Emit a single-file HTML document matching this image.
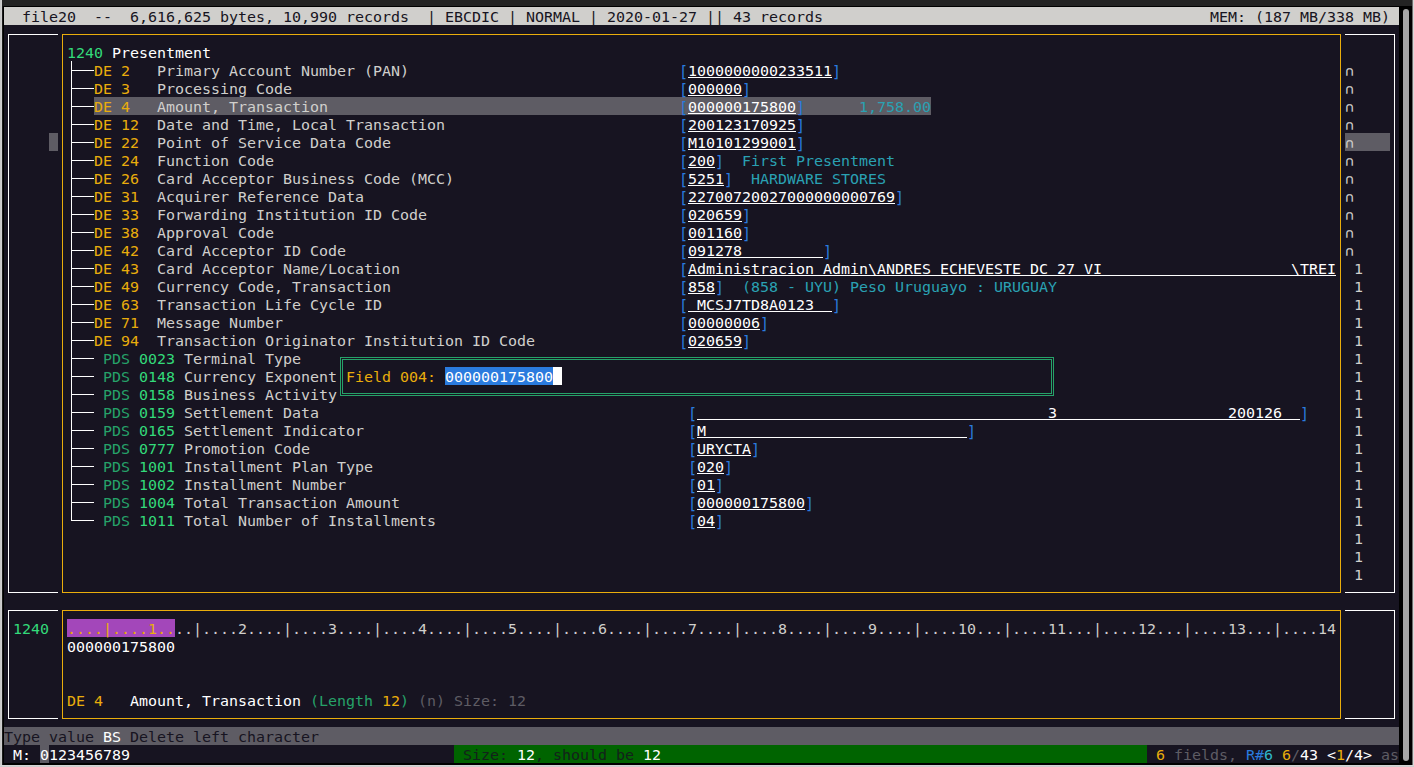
<!DOCTYPE html>
<html lang="en"><head><meta charset="utf-8"><title>file20 - record editor</title>
<style>
html,body{margin:0;padding:0;background:#000;}
#win{position:relative;width:1414px;height:767px;overflow:hidden;background:#000;}
#term{position:absolute;left:4px;top:7px;width:1395px;height:756px;background:#171421;overflow:hidden;font-family:"DejaVu Sans Mono","Liberation Mono",monospace;font-size:15px;line-height:18px;font-kerning:none;font-variant-ligatures:none;letter-spacing:-0.0308px;}
#term div.r{position:absolute;left:0;height:18px;width:1395px;white-space:pre;transform-origin:0 14px;transform:translateY(1px) scaleY(0.88);}
#term div.r span{position:absolute;top:0;height:18px;white-space:pre;}
#term i{position:absolute;display:block;}
.w{color:#ffffff}
.l{color:#d0cfcc}
.y{color:#e9ad0c}
.g{color:#26a269}
.G{color:#33da7a}
.b{color:#2a7bde}
.c{color:#2aa1b3}
.B{color:#2a7bde;transform-origin:0 14px;transform:scaleY(1.13636) translateY(1px)}
.d{color:#5e5c64}
.C{color:#2fb8cc}
.u{color:#ffffff}
.k{color:#171421}
.hd{color:#171421}
.gd{color:#13211b}
</style></head><body>
<div id="win">
<div style="position:absolute;left:0;top:0;width:1414px;height:6px;background:#232323"></div>
<div style="position:absolute;left:2px;top:6px;width:1px;height:759px;background:#1c1c1c"></div>
<div style="position:absolute;left:0;top:0;width:2px;height:767px;background:linear-gradient(90deg,#c4c4c4,#d2d2d2)"></div>
<div style="position:absolute;left:1412px;top:0;width:1px;height:767px;background:#6e6e6e"></div>
<div style="position:absolute;left:1413px;top:0;width:1px;height:767px;background:#d8d8d8"></div>
<div style="position:absolute;left:0;top:765px;width:1414px;height:2px;background:linear-gradient(180deg,#d8d8d8,#c8c8c8)"></div>
<div style="position:absolute;left:1403px;top:9px;width:6px;height:752px;border-radius:3px;background:#a6a6a6"></div>
<div id="term">
<i style="left:0px;top:0px;width:1395px;height:18px;background:#d0cfcc"></i>
<i style="left:90px;top:90px;width:837px;height:18px;background:#5e5c64"></i>
<i style="left:1341px;top:126px;width:45px;height:18px;background:#5e5c64"></i>
<i style="left:45px;top:126px;width:9px;height:18px;background:#5e5c64"></i>
<i style="left:333px;top:342px;width:720px;height:18px;background:#171421"></i>
<i style="left:333px;top:360px;width:720px;height:18px;background:#171421"></i>
<i style="left:333px;top:378px;width:720px;height:18px;background:#171421"></i>
<i style="left:441px;top:360px;width:108px;height:18px;background:#2a7bde"></i>
<i style="left:549px;top:360px;width:9px;height:18px;background:#ffffff"></i>
<i style="left:63px;top:612px;width:108px;height:18px;background:#a347ba"></i>
<i style="left:0px;top:720px;width:1395px;height:18px;background:#5e5c64"></i>
<i style="left:36px;top:738px;width:9px;height:18px;background:#5e5c64"></i>
<i style="left:450px;top:738px;width:693px;height:18px;background:#006400"></i>
<i style="left:4px;top:27px;width:50px;height:1px;background:#ffffff"></i>
<i style="left:4px;top:585px;width:50px;height:1px;background:#ffffff"></i>
<i style="left:4px;top:27px;width:1px;height:559px;background:#ffffff"></i>
<i style="left:58px;top:27px;width:1279px;height:1px;background:#e9ad0c"></i>
<i style="left:58px;top:585px;width:1279px;height:1px;background:#e9ad0c"></i>
<i style="left:58px;top:27px;width:1px;height:559px;background:#e9ad0c"></i>
<i style="left:1336px;top:27px;width:1px;height:559px;background:#e9ad0c"></i>
<i style="left:1341px;top:27px;width:50px;height:1px;background:#ffffff"></i>
<i style="left:1341px;top:585px;width:50px;height:1px;background:#ffffff"></i>
<i style="left:1390px;top:27px;width:1px;height:559px;background:#ffffff"></i>
<i style="left:4px;top:603px;width:50px;height:1px;background:#ffffff"></i>
<i style="left:4px;top:711px;width:50px;height:1px;background:#ffffff"></i>
<i style="left:4px;top:603px;width:1px;height:109px;background:#ffffff"></i>
<i style="left:58px;top:603px;width:1279px;height:1px;background:#e9ad0c"></i>
<i style="left:58px;top:711px;width:1279px;height:1px;background:#e9ad0c"></i>
<i style="left:58px;top:603px;width:1px;height:109px;background:#e9ad0c"></i>
<i style="left:1336px;top:603px;width:1px;height:109px;background:#e9ad0c"></i>
<i style="left:1341px;top:603px;width:50px;height:1px;background:#ffffff"></i>
<i style="left:1341px;top:711px;width:50px;height:1px;background:#ffffff"></i>
<i style="left:1390px;top:603px;width:1px;height:109px;background:#ffffff"></i>
<i style="left:67px;top:63px;width:23px;height:1px;background:#ffffff"></i>
<i style="left:684px;top:70px;width:144px;height:1px;background:#ffffff"></i>
<i style="left:67px;top:81px;width:23px;height:1px;background:#ffffff"></i>
<i style="left:684px;top:88px;width:54px;height:1px;background:#ffffff"></i>
<i style="left:67px;top:99px;width:23px;height:1px;background:#ffffff"></i>
<i style="left:684px;top:106px;width:108px;height:1px;background:#ffffff"></i>
<i style="left:67px;top:117px;width:23px;height:1px;background:#ffffff"></i>
<i style="left:684px;top:124px;width:108px;height:1px;background:#ffffff"></i>
<i style="left:67px;top:135px;width:23px;height:1px;background:#ffffff"></i>
<i style="left:684px;top:142px;width:108px;height:1px;background:#ffffff"></i>
<i style="left:67px;top:153px;width:23px;height:1px;background:#ffffff"></i>
<i style="left:684px;top:160px;width:27px;height:1px;background:#ffffff"></i>
<i style="left:67px;top:171px;width:23px;height:1px;background:#ffffff"></i>
<i style="left:684px;top:178px;width:36px;height:1px;background:#ffffff"></i>
<i style="left:67px;top:189px;width:23px;height:1px;background:#ffffff"></i>
<i style="left:684px;top:196px;width:207px;height:1px;background:#ffffff"></i>
<i style="left:67px;top:207px;width:23px;height:1px;background:#ffffff"></i>
<i style="left:684px;top:214px;width:54px;height:1px;background:#ffffff"></i>
<i style="left:67px;top:225px;width:23px;height:1px;background:#ffffff"></i>
<i style="left:684px;top:232px;width:54px;height:1px;background:#ffffff"></i>
<i style="left:67px;top:243px;width:23px;height:1px;background:#ffffff"></i>
<i style="left:684px;top:250px;width:135px;height:1px;background:#ffffff"></i>
<i style="left:67px;top:261px;width:23px;height:1px;background:#ffffff"></i>
<i style="left:684px;top:268px;width:648px;height:1px;background:#ffffff"></i>
<i style="left:67px;top:279px;width:23px;height:1px;background:#ffffff"></i>
<i style="left:684px;top:286px;width:27px;height:1px;background:#ffffff"></i>
<i style="left:67px;top:297px;width:23px;height:1px;background:#ffffff"></i>
<i style="left:684px;top:304px;width:144px;height:1px;background:#ffffff"></i>
<i style="left:67px;top:315px;width:23px;height:1px;background:#ffffff"></i>
<i style="left:684px;top:322px;width:72px;height:1px;background:#ffffff"></i>
<i style="left:67px;top:333px;width:23px;height:1px;background:#ffffff"></i>
<i style="left:684px;top:340px;width:54px;height:1px;background:#ffffff"></i>
<i style="left:67px;top:351px;width:23px;height:1px;background:#ffffff"></i>
<i style="left:67px;top:369px;width:23px;height:1px;background:#ffffff"></i>
<i style="left:67px;top:387px;width:23px;height:1px;background:#ffffff"></i>
<i style="left:67px;top:405px;width:23px;height:1px;background:#ffffff"></i>
<i style="left:693px;top:412px;width:603px;height:1px;background:#ffffff"></i>
<i style="left:67px;top:423px;width:23px;height:1px;background:#ffffff"></i>
<i style="left:693px;top:430px;width:270px;height:1px;background:#ffffff"></i>
<i style="left:67px;top:441px;width:23px;height:1px;background:#ffffff"></i>
<i style="left:693px;top:448px;width:54px;height:1px;background:#ffffff"></i>
<i style="left:67px;top:459px;width:23px;height:1px;background:#ffffff"></i>
<i style="left:693px;top:466px;width:27px;height:1px;background:#ffffff"></i>
<i style="left:67px;top:477px;width:23px;height:1px;background:#ffffff"></i>
<i style="left:693px;top:484px;width:18px;height:1px;background:#ffffff"></i>
<i style="left:67px;top:495px;width:23px;height:1px;background:#ffffff"></i>
<i style="left:693px;top:502px;width:108px;height:1px;background:#ffffff"></i>
<i style="left:67px;top:513px;width:23px;height:1px;background:#ffffff"></i>
<i style="left:693px;top:520px;width:18px;height:1px;background:#ffffff"></i>
<i style="left:67px;top:54px;width:1px;height:460px;background:#ffffff"></i>
<i style="left:336px;top:350px;width:712px;height:37px;border:1px solid #26a269"></i>
<i style="left:338px;top:352px;width:708px;height:33px;border:1px solid #26a269"></i>
<div class="r" style="top:0px"><span class="k" style="left:0px">  file20  --  6,616,625 bytes, 10,990 records  | EBCDIC | NORMAL | 2020-01-27 || 43 records</span><span class="k" style="left:1206px">MEM: (187 MB/338 MB)</span></div>
<div class="r" style="top:36px"><span class="G" style="left:63px">1240</span><span class="w" style="left:108px">Presentment</span></div>
<div class="r" style="top:54px"><span class="y" style="left:90px">DE</span><span class="y" style="left:117px">2</span><span class="l" style="left:153px">Primary Account Number (PAN)</span><span class="B" style="left:675px">[</span><span class="u" style="left:684px">1000000000233511</span><span class="B" style="left:828px">]</span><span class="l" style="left:1341px">∩</span></div>
<div class="r" style="top:72px"><span class="y" style="left:90px">DE</span><span class="y" style="left:117px">3</span><span class="l" style="left:153px">Processing Code</span><span class="B" style="left:675px">[</span><span class="u" style="left:684px">000000</span><span class="B" style="left:738px">]</span><span class="l" style="left:1341px">∩</span></div>
<div class="r" style="top:90px"><span class="y" style="left:90px">DE</span><span class="y" style="left:117px">4</span><span class="l" style="left:153px">Amount, Transaction</span><span class="B" style="left:675px">[</span><span class="u" style="left:684px">000000175800</span><span class="B" style="left:792px">]</span><span class="c" style="left:855px">1,758.00</span><span class="l" style="left:1341px">∩</span></div>
<div class="r" style="top:108px"><span class="y" style="left:90px">DE</span><span class="y" style="left:117px">12</span><span class="l" style="left:153px">Date and Time, Local Transaction</span><span class="B" style="left:675px">[</span><span class="u" style="left:684px">200123170925</span><span class="B" style="left:792px">]</span><span class="l" style="left:1341px">∩</span></div>
<div class="r" style="top:126px"><span class="y" style="left:90px">DE</span><span class="y" style="left:117px">22</span><span class="l" style="left:153px">Point of Service Data Code</span><span class="B" style="left:675px">[</span><span class="u" style="left:684px">M10101299001</span><span class="B" style="left:792px">]</span><span class="l" style="left:1341px">∩</span></div>
<div class="r" style="top:144px"><span class="y" style="left:90px">DE</span><span class="y" style="left:117px">24</span><span class="l" style="left:153px">Function Code</span><span class="B" style="left:675px">[</span><span class="u" style="left:684px">200</span><span class="B" style="left:711px">]</span><span class="c" style="left:738px">First Presentment</span><span class="l" style="left:1341px">∩</span></div>
<div class="r" style="top:162px"><span class="y" style="left:90px">DE</span><span class="y" style="left:117px">26</span><span class="l" style="left:153px">Card Acceptor Business Code (MCC)</span><span class="B" style="left:675px">[</span><span class="u" style="left:684px">5251</span><span class="B" style="left:720px">]</span><span class="c" style="left:747px">HARDWARE STORES</span><span class="l" style="left:1341px">∩</span></div>
<div class="r" style="top:180px"><span class="y" style="left:90px">DE</span><span class="y" style="left:117px">31</span><span class="l" style="left:153px">Acquirer Reference Data</span><span class="B" style="left:675px">[</span><span class="u" style="left:684px">22700720027000000000769</span><span class="B" style="left:891px">]</span><span class="l" style="left:1341px">∩</span></div>
<div class="r" style="top:198px"><span class="y" style="left:90px">DE</span><span class="y" style="left:117px">33</span><span class="l" style="left:153px">Forwarding Institution ID Code</span><span class="B" style="left:675px">[</span><span class="u" style="left:684px">020659</span><span class="B" style="left:738px">]</span><span class="l" style="left:1341px">∩</span></div>
<div class="r" style="top:216px"><span class="y" style="left:90px">DE</span><span class="y" style="left:117px">38</span><span class="l" style="left:153px">Approval Code</span><span class="B" style="left:675px">[</span><span class="u" style="left:684px">001160</span><span class="B" style="left:738px">]</span><span class="l" style="left:1341px">∩</span></div>
<div class="r" style="top:234px"><span class="y" style="left:90px">DE</span><span class="y" style="left:117px">42</span><span class="l" style="left:153px">Card Acceptor ID Code</span><span class="B" style="left:675px">[</span><span class="u" style="left:684px">091278         </span><span class="B" style="left:819px">]</span><span class="l" style="left:1341px">∩</span></div>
<div class="r" style="top:252px"><span class="y" style="left:90px">DE</span><span class="y" style="left:117px">43</span><span class="l" style="left:153px">Card Acceptor Name/Location</span><span class="B" style="left:675px">[</span><span class="u" style="left:684px">Administracion Admin\ANDRES ECHEVESTE DC 27 VI                     \TREI</span><span class="l" style="left:1350px">1</span></div>
<div class="r" style="top:270px"><span class="y" style="left:90px">DE</span><span class="y" style="left:117px">49</span><span class="l" style="left:153px">Currency Code, Transaction</span><span class="B" style="left:675px">[</span><span class="u" style="left:684px">858</span><span class="B" style="left:711px">]</span><span class="c" style="left:738px">(858 - UYU) Peso Uruguayo : URUGUAY</span><span class="l" style="left:1350px">1</span></div>
<div class="r" style="top:288px"><span class="y" style="left:90px">DE</span><span class="y" style="left:117px">63</span><span class="l" style="left:153px">Transaction Life Cycle ID</span><span class="B" style="left:675px">[</span><span class="u" style="left:684px"> MCSJ7TD8A0123  </span><span class="B" style="left:828px">]</span><span class="l" style="left:1350px">1</span></div>
<div class="r" style="top:306px"><span class="y" style="left:90px">DE</span><span class="y" style="left:117px">71</span><span class="l" style="left:153px">Message Number</span><span class="B" style="left:675px">[</span><span class="u" style="left:684px">00000006</span><span class="B" style="left:756px">]</span><span class="l" style="left:1350px">1</span></div>
<div class="r" style="top:324px"><span class="y" style="left:90px">DE</span><span class="y" style="left:117px">94</span><span class="l" style="left:153px">Transaction Originator Institution ID Code</span><span class="B" style="left:675px">[</span><span class="u" style="left:684px">020659</span><span class="B" style="left:738px">]</span><span class="l" style="left:1350px">1</span></div>
<div class="r" style="top:342px"><span class="g" style="left:99px">PDS</span><span class="G" style="left:135px">0023</span><span class="l" style="left:180px">Terminal Type</span><span class="l" style="left:1350px">1</span></div>
<div class="r" style="top:360px"><span class="g" style="left:99px">PDS</span><span class="G" style="left:135px">0148</span><span class="l" style="left:180px">Currency Exponent</span><span class="y" style="left:342px">Field 004:</span><span class="w" style="left:441px">000000175800</span><span class="l" style="left:1350px">1</span></div>
<div class="r" style="top:378px"><span class="g" style="left:99px">PDS</span><span class="G" style="left:135px">0158</span><span class="l" style="left:180px">Business Activity</span><span class="l" style="left:1350px">1</span></div>
<div class="r" style="top:396px"><span class="g" style="left:99px">PDS</span><span class="G" style="left:135px">0159</span><span class="l" style="left:180px">Settlement Data</span><span class="B" style="left:684px">[</span><span class="u" style="left:693px">                                       3                   200126  </span><span class="B" style="left:1296px">]</span><span class="l" style="left:1350px">1</span></div>
<div class="r" style="top:414px"><span class="g" style="left:99px">PDS</span><span class="G" style="left:135px">0165</span><span class="l" style="left:180px">Settlement Indicator</span><span class="B" style="left:684px">[</span><span class="u" style="left:693px">M                             </span><span class="B" style="left:963px">]</span><span class="l" style="left:1350px">1</span></div>
<div class="r" style="top:432px"><span class="g" style="left:99px">PDS</span><span class="G" style="left:135px">0777</span><span class="l" style="left:180px">Promotion Code</span><span class="B" style="left:684px">[</span><span class="u" style="left:693px">URYCTA</span><span class="B" style="left:747px">]</span><span class="l" style="left:1350px">1</span></div>
<div class="r" style="top:450px"><span class="g" style="left:99px">PDS</span><span class="G" style="left:135px">1001</span><span class="l" style="left:180px">Installment Plan Type</span><span class="B" style="left:684px">[</span><span class="u" style="left:693px">020</span><span class="B" style="left:720px">]</span><span class="l" style="left:1350px">1</span></div>
<div class="r" style="top:468px"><span class="g" style="left:99px">PDS</span><span class="G" style="left:135px">1002</span><span class="l" style="left:180px">Installment Number</span><span class="B" style="left:684px">[</span><span class="u" style="left:693px">01</span><span class="B" style="left:711px">]</span><span class="l" style="left:1350px">1</span></div>
<div class="r" style="top:486px"><span class="g" style="left:99px">PDS</span><span class="G" style="left:135px">1004</span><span class="l" style="left:180px">Total Transaction Amount</span><span class="B" style="left:684px">[</span><span class="u" style="left:693px">000000175800</span><span class="B" style="left:801px">]</span><span class="l" style="left:1350px">1</span></div>
<div class="r" style="top:504px"><span class="g" style="left:99px">PDS</span><span class="G" style="left:135px">1011</span><span class="l" style="left:180px">Total Number of Installments</span><span class="B" style="left:684px">[</span><span class="u" style="left:693px">04</span><span class="B" style="left:711px">]</span><span class="l" style="left:1350px">1</span></div>
<div class="r" style="top:522px"><span class="l" style="left:1350px">1</span></div>
<div class="r" style="top:540px"><span class="l" style="left:1350px">1</span></div>
<div class="r" style="top:558px"><span class="l" style="left:1350px">1</span></div>
<div class="r" style="top:612px"><span class="G" style="left:9px">1240</span><span class="y" style="left:63px">....|....1..</span><span class="l" style="left:171px">..|....2....|....3....|....4....|....5....|....6....|....7....|....8....|....9....|....10...|....11...|....12...|....13...|....14</span></div>
<div class="r" style="top:630px"><span class="w" style="left:63px">000000175800</span></div>
<div class="r" style="top:684px"><span class="y" style="left:63px">DE 4</span><span class="w" style="left:126px">Amount, Transaction</span><span class="g" style="left:306px">(Length</span><span class="y" style="left:378px">12</span><span class="g" style="left:396px">)</span><span class="d" style="left:414px">(n) Size: 12</span></div>
<div class="r" style="top:720px"><span class="hd" style="left:0px">Type value</span><span class="w" style="left:99px">BS</span><span class="hd" style="left:126px">Delete left character</span></div>
<div class="r" style="top:738px"><span class="w" style="left:9px">M:</span><span class="w" style="left:36px">0123456789</span><span class="gd" style="left:459px">Size:</span><span class="w" style="left:513px">12</span><span class="gd" style="left:531px">, should be</span><span class="w" style="left:639px">12</span><span class="y" style="left:1152px">6</span><span class="d" style="left:1170px">fields,</span><span class="b" style="left:1242px">R#</span><span class="C" style="left:1260px">6</span><span class="y" style="left:1278px">6</span><span class="d" style="left:1287px">/</span><span class="w" style="left:1296px">43</span><span class="w" style="left:1323px">&lt;</span><span class="y" style="left:1332px">1</span><span class="w" style="left:1341px">/4&gt;</span><span class="d" style="left:1377px">as</span></div>
</div></div>
</body></html>
